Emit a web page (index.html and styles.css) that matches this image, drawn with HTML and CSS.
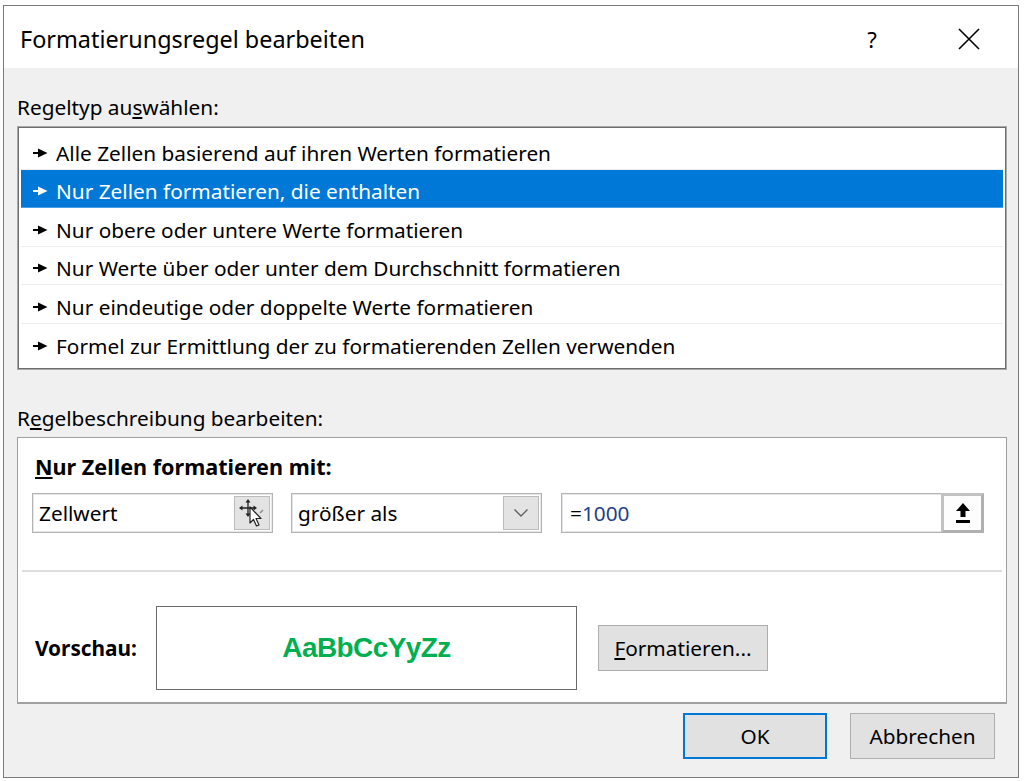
FILE: index.html
```html
<!DOCTYPE html>
<html lang="de">
<head>
  <meta charset="UTF-8">
  <title>Formatierungsregel bearbeiten</title>
  <link rel="stylesheet" href="styles.css">
</head>
<body>
  <div class="dialog">
    <div class="title-bar">
      <span class="title">Formatierungsregel bearbeiten</span>
      <span class="help">?</span>
      <span class="close">
        <svg width="24" height="24" viewBox="0 0 24 24"><path d="M2 2L22 22M22 2L2 22" stroke="#000" stroke-width="1.6" fill="none"/></svg>
      </span>
    </div>

    <div class="dialog-body">
      <div class="group-label label-first">Regeltyp au<u>s</u>wählen:</div>
      <ul class="rule-list">
        <li class="rule"><svg class="pointer" width="15" height="10" viewBox="0 0 15 10"><path d="M0 5H7" stroke="currentColor" stroke-width="2"/><path d="M5 0.5L14.5 5L5 9.5Z" fill="currentColor"/></svg>Alle Zellen basierend auf ihren Werten formatieren</li>
        <li class="rule selected"><svg class="pointer" width="15" height="10" viewBox="0 0 15 10"><path d="M0 5H7" stroke="currentColor" stroke-width="2"/><path d="M5 0.5L14.5 5L5 9.5Z" fill="currentColor"/></svg>Nur Zellen formatieren, die enthalten</li>
        <li class="rule"><svg class="pointer" width="15" height="10" viewBox="0 0 15 10"><path d="M0 5H7" stroke="currentColor" stroke-width="2"/><path d="M5 0.5L14.5 5L5 9.5Z" fill="currentColor"/></svg>Nur obere oder untere Werte formatieren</li>
        <li class="rule"><svg class="pointer" width="15" height="10" viewBox="0 0 15 10"><path d="M0 5H7" stroke="currentColor" stroke-width="2"/><path d="M5 0.5L14.5 5L5 9.5Z" fill="currentColor"/></svg>Nur Werte über oder unter dem Durchschnitt formatieren</li>
        <li class="rule"><svg class="pointer" width="15" height="10" viewBox="0 0 15 10"><path d="M0 5H7" stroke="currentColor" stroke-width="2"/><path d="M5 0.5L14.5 5L5 9.5Z" fill="currentColor"/></svg>Nur eindeutige oder doppelte Werte formatieren</li>
        <li class="rule"><svg class="pointer" width="15" height="10" viewBox="0 0 15 10"><path d="M0 5H7" stroke="currentColor" stroke-width="2"/><path d="M5 0.5L14.5 5L5 9.5Z" fill="currentColor"/></svg>Formel zur Ermittlung der zu formatierenden Zellen verwenden</li>
      </ul>

      <div class="group-label label-second">R<u>e</u>gelbeschreibung bearbeiten:</div>
      <div class="desc-panel">
        <div class="desc-heading"><u>N</u>ur Zellen formatieren mit:</div>

        <div class="condition-row">
          <div class="field field-type">
            <span class="field-text">Zellwert</span>
            <span class="field-btn">
              <svg width="26" height="28" viewBox="0 0 26 28">
                <path d="M9 2V16M2 9H16" stroke="#222" stroke-width="1.3"/>
                <path d="M9 0L6.5 3.5H11.5Z M9 18L6.5 14.5H11.5Z M0 9L3.5 6.5V11.5Z M18 9L14.5 6.5V11.5Z" fill="#222"/>
                <path d="M11 8V24L14.5 20.5L17.5 27L20 26L17 19.5H22Z" fill="#fff" stroke="#222" stroke-width="1.2" stroke-linejoin="round"/>
                <path d="M21 14L24 11" stroke="#888" stroke-width="1.5"/>
              </svg>
            </span>
          </div>
          <div class="field field-op">
            <span class="field-text">größer als</span>
            <span class="field-btn">
              <svg width="16" height="10" viewBox="0 0 16 10"><path d="M1.5 1.5L8 8L14.5 1.5" stroke="#606060" stroke-width="1.4" fill="none"/></svg>
            </span>
          </div>
          <div class="field field-value">
            <span class="field-text">=<span class="num">1000</span></span>
            <span class="ref-btn">
              <svg width="18" height="22" viewBox="0 0 18 22"><path d="M9 1L2 9H6.5V15H11.5V9H16Z" fill="#000"/><rect x="2" y="18" width="14" height="3" fill="#000"/></svg>
            </span>
          </div>
        </div>

        <div class="divider"></div>

        <div class="preview-row">
          <span class="preview-label">Vorschau:</span>
          <div class="preview-box"><span class="preview-sample">AaBbCcYyZz</span></div>
          <button class="btn btn-format"><u>F</u>ormatieren...</button>
        </div>
      </div>

      <div class="footer">
        <button class="btn btn-default">OK</button>
        <button class="btn">Abbrechen</button>
      </div>
    </div>
  </div>
</body>
</html>
```

FILE: styles.css
```css
body {
  margin: 0;
  background-color: #fff;
  font-family: "Noto Sans", "Open Sans", sans-serif;
  font-size: 20.8px;
  color: #000;
}

.dialog {
  box-sizing: border-box;
  width: 1016px;
  height: 773px;
  margin: 5px 0 0 3px;
  border: 1px solid #7a7a7a;
  background-color: #f0f0f0;
  display: flex;
  flex-direction: column;
}

/* Title bar */
.title-bar {
  height: 62px;
  background-color: #fff;
  display: flex;
  align-items: center;
  padding-left: 16px;
  padding-top: 4px;
  box-sizing: border-box;
}

.title {
  font-size: 23.4px;
  flex: 1;
}

.help {
  font-size: 22px;
  width: 24px;
  text-align: center;
  margin-right: 73px;
}

.close {
  width: 24px;
  height: 24px;
  margin-right: 37px;
}

.close svg {
  display: block;
}

/* Body */
.dialog-body {
  flex: 1;
  padding: 0 11px 0 13px;
  display: flex;
  flex-direction: column;
}

.group-label {
  line-height: 24px;
}

.label-first {
  margin-top: 27px;
}

.label-second {
  margin-top: 36px;
}

.rule-list {
  list-style: none;
  margin: 7px 0 0 0;
  padding: 4px 3px 3px 3px;
  height: 244px;
  box-sizing: border-box;
  width: 990px;
  background-color: #fff;
  border: 1px solid #a8a8a8;
  box-shadow: inset 0 0 0 1px #6e6e6e;
}

.rule {
  height: 38.5px;
  box-sizing: border-box;
  border-bottom: 1px solid #ededed;
  display: flex;
  align-items: center;
  padding-left: 12px;
  padding-top: 6px;
  white-space: nowrap;
}

.rule:last-child {
  border-bottom: none;
}

.rule.selected {
  background-color: #0078d7;
  color: #fff;
  border-bottom-color: #4a9ee3;
}

.pointer {
  margin-right: 8px;
  flex-shrink: 0;
}

/* Description panel */
.desc-panel {
  margin-top: 7px;
  width: 990px;
  height: 267px;
  box-sizing: border-box;
  background-color: #fff;
  border: 1px solid #a0a0a0;
  border-bottom-width: 2px;
  padding: 17px 2px 0 2px;
  display: flex;
  flex-direction: column;
}

.desc-heading {
  font-weight: bold;
  font-size: 21.6px;
  line-height: 24px;
  padding-left: 15px;
}

.condition-row {
  display: flex;
  margin-top: 14px;
  padding-left: 12px;
  gap: 18px;
}

.field {
  box-sizing: border-box;
  height: 40px;
  border: 1px solid #b4b4b4;
  box-shadow: inset 0 0 0 1px #e6e6e6;
  display: flex;
  align-items: center;
  justify-content: space-between;
  padding: 0 2px 0 6px;
  background-color: #fff;
}

.field-type {
  width: 241px;
}

.field-op {
  width: 251px;
}

.field-value {
  width: 423px;
  margin-left: 1px;
  padding-left: 8px;
  padding-right: 0;
}

.num {
  color: #1f3f86;
}

.field-btn {
  box-sizing: border-box;
  width: 36px;
  height: 34px;
  background-color: #e3e3e3;
  border: 1px solid #bcbcbc;
  display: flex;
  align-items: center;
  justify-content: center;
}

.ref-btn {
  box-sizing: border-box;
  width: 43px;
  height: 40px;
  margin-right: -1px;
  border: 3px solid #c2c2c2;
  border-right-color: #b0b0b0;
  border-bottom-color: #b0b0b0;
  background-color: #fdfdfd;
  display: flex;
  align-items: center;
  justify-content: center;
}

.divider {
  margin: 37px 2px 0 2px;
  height: 2px;
  background-color: #dedede;
}

.preview-row {
  display: flex;
  align-items: center;
  margin-top: 34px;
}

.preview-label {
  font-weight: bold;
  width: 136px;
  padding-left: 15px;
  box-sizing: border-box;
}

.preview-box {
  box-sizing: border-box;
  width: 421px;
  height: 84px;
  border: 1px solid #6a6a6a;
  display: flex;
  align-items: center;
  justify-content: center;
}

.preview-sample {
  font-family: "Liberation Sans", Arial, sans-serif;
  font-weight: bold;
  font-size: 28px;
  letter-spacing: -0.6px;
  color: #00b050;
}

/* Buttons */
.btn {
  box-sizing: border-box;
  font-family: inherit;
  font-size: 20.8px;
  color: #000;
  background-color: #e1e1e1;
  border: 1px solid #adadad;
  width: 145px;
  height: 46px;
  padding: 0;
}

.btn-format {
  width: 170px;
  margin-left: 21px;
}

.btn-default {
  border: 2px solid #0078d7;
  width: 144px;
}

.footer {
  display: flex;
  justify-content: flex-end;
  gap: 23px;
  margin-top: 9px;
  padding-right: 12px;
}
```
